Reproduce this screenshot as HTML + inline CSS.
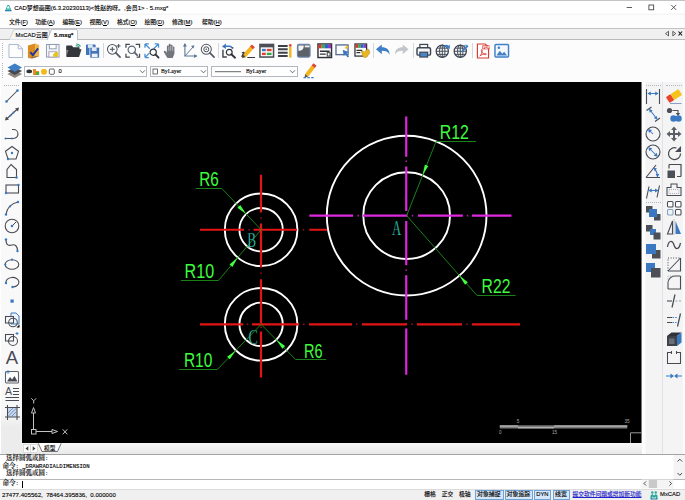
<!DOCTYPE html>
<html lang="zh-CN">
<head>
<meta charset="utf-8">
<title>CAD梦想画图</title>
<style>
html,body{margin:0;padding:0;background:#f0f0f0;}
body{width:685px;height:500px;overflow:hidden;position:relative;font-family:"Liberation Sans","Noto Sans CJK SC",sans-serif;color:#000;}
.abs{position:absolute;}
svg{overflow:visible;}
.t{position:absolute;white-space:nowrap;-webkit-text-stroke:.12px currentColor;}
.menu u{text-decoration-thickness:.5px;text-underline-offset:.5px;}
.serif{font-family:"Liberation Serif","Noto Serif CJK SC",serif;}
.mono{font-family:"Liberation Mono","Noto Serif CJK SC",monospace;font-weight:500;}
.lm{font-size:5.62px;}
#titlebar{left:0;top:0;width:685px;height:15px;background:linear-gradient(#fff 0,#fff 11.5px,#f3f3f3 14px);border-top:1px solid #c4c4c4;box-sizing:border-box;}
#menubar{left:0;top:14.5px;width:685px;height:14px;background:#fdfdfd;}
#tabbar{left:0;top:28px;width:685px;height:12px;background:#f0f0f1;border-top:1px solid #c2c3c6;border-bottom:1px solid #b9babd;box-sizing:border-box;}
#tb1{left:0;top:40px;width:685px;height:21px;background:#fcfcfd;}
#tb2{left:0;top:61px;width:685px;height:21px;background:#fcfcfd;}
#lefttb{left:0;top:82px;width:22px;height:372px;background:linear-gradient(#fafafb 0,#f8f8f9 330px,#ececec 345px);border-left:1.5px solid #fff;box-sizing:border-box;}
#canvas{left:22px;top:82px;}
#righttb{left:641.5px;top:82px;width:43.5px;height:372px;background:linear-gradient(90deg,#fdfdfd 0,#fdfdfd 3px,#f4f4f5 4px,#f4f4f5 40.5px,#fdfdfd 41.5px);}
#modelstrip{left:22px;top:443px;width:620px;height:11px;background:linear-gradient(#f8f8f8,#e9e9e9);}
#cmdhist{left:0;top:453.7px;width:685px;height:25.3px;background:#fff;border-top:1.4px solid #a4a4a4;box-sizing:border-box;}
#cmdline{left:0;top:479px;width:685px;height:10px;background:#fff;border-top:1px solid #b8b8b8;box-sizing:border-box;}
#status{left:0;top:489px;width:685px;height:11px;background:#f0f0f0;border-top:1px solid #dcdcdc;box-sizing:border-box;}
.grip{width:1px;border-left:1px dotted #b0b6c0;}
.hgrip{height:1px;border-top:1px dotted #b0b6c0;}
.combo{background:#fff;border:1px solid #b3b7be;box-sizing:border-box;}
.sbtn{background:#d5e7f8;border:1px solid #6fa3d8;box-sizing:border-box;}
</style>
</head>
<body>
<div id="titlebar" class="abs"></div>
<svg class="abs" style="left:4.8px;top:4.6px" width="6.6" height="6.4" viewBox="0 0 16 15"><path d="M6 0h4l5 11H1z" fill="#2aa89a"/><path d="M6.5 3h3l2 5h-7z" fill="#fff"/><path d="M0 12h16v3H0z" fill="#1f7fae"/></svg>
<div class="t " style="left:14.2px;top:4.62px;font-size:5.97px;line-height:7.16px;">CAD梦想画图(6.3.20230113)&lt;姓赵的呀。,会员1&gt; - 5.mxg*</div>
<svg class="abs" style="left:620px;top:0" width="65" height="15" viewBox="620 0 65 15"><path d="M626.7 7.5h5.3" stroke="#333" stroke-width=".8"/><rect x="648.9" y="5" width="4.8" height="4.8" fill="none" stroke="#333" stroke-width=".8"/><path d="M671.2 4.9l5 5M676.2 4.9l-5 5" stroke="#333" stroke-width=".8"/></svg>
<div id="menubar" class="abs"></div>
<div class="t menu" style="left:9px;top:18.72px;font-size:5.8px;line-height:6.96px;">文件(<u>F</u>)</div>
<div class="t menu" style="left:35.3px;top:18.72px;font-size:5.8px;line-height:6.96px;">功能(<u>A</u>)</div>
<div class="t menu" style="left:62.5px;top:18.72px;font-size:5.8px;line-height:6.96px;">编辑(<u>E</u>)</div>
<div class="t menu" style="left:89.5px;top:18.72px;font-size:5.8px;line-height:6.96px;">视图(<u>V</u>)</div>
<div class="t menu" style="left:117px;top:18.72px;font-size:5.8px;line-height:6.96px;">格式(<u>O</u>)</div>
<div class="t menu" style="left:144.5px;top:18.72px;font-size:5.8px;line-height:6.96px;">绘图(<u>D</u>)</div>
<div class="t menu" style="left:172px;top:18.72px;font-size:5.8px;line-height:6.96px;">修改(<u>M</u>)</div>
<div class="t menu" style="left:202px;top:18.72px;font-size:5.8px;line-height:6.96px;">帮助(<u>H</u>)</div>
<div id="tabbar" class="abs"></div>
<svg class="abs" style="left:0;top:28px" width="685" height="13" viewBox="0 28 685 13"><path d="M9 40l5-10.5h35l1.5 10.5z" fill="#f4f5f7" stroke="#b4b8c0" stroke-width=".6"/><path d="M47 40.5l4.5-11h24.5q1.5 0 1.5 1.5v9.5z" fill="#fff" stroke="#a8acb4" stroke-width=".7"/><path d="M668.5 31.3v4.6l-3-2.3zM672.8 31.3v4.6l3-2.3z" fill="none" stroke="#222" stroke-width=".7"/><path d="M678.5 31.5l3.6 4M682.1 31.5l-3.6 4" stroke="#111" stroke-width="1.1"/></svg>
<div class="t " style="left:15.5px;top:31.76px;font-size:5.9px;line-height:7.08px;">MxCAD云图</div>
<div class="t " style="left:54px;top:31.76px;font-size:5.9px;line-height:7.08px;font-weight:bold;">5.mxg*</div>
<div id="tb1" class="abs"></div>
<div class="grip abs" style="left:2px;top:43px;height:15px"></div>
<svg class="abs" style="left:7.5px;top:43px" width="15.5" height="15.5" viewBox="0 0 16 16"><path d="M1 1.5h9.5l4.5 4.5v9h-14z" fill="#fdfdfe" stroke="#a9b6cc"/><path d="M10.5 1.5v4.5h4.5" fill="none" stroke="#a9b6cc"/></svg>
<svg class="abs" style="left:25.8px;top:43px" width="15.5" height="15.5" viewBox="0 0 16 16"><path d="M2 2.5l7.5-2v13l-7.5 2z" fill="#dd8a1e"/><path d="M9.5 .500l4 1.5v12l-4-.500z" fill="#f0b04a"/><path d="M2 15.5l7.5-2 4 .500-7 2z" fill="#a86a20"/><path d="M4.5 9.5l2.5 3 5.5-7" fill="none" stroke="#1d3a9c" stroke-width="2"/></svg>
<svg class="abs" style="left:45px;top:43px" width="15.5" height="15.5" viewBox="0 0 16 16"><rect x="1.5" y="1.5" width="13" height="13" fill="#f3f4f8" stroke="#8f9bb5"/><rect x="4.5" y="1.5" width="7" height="4.5" fill="#fff" stroke="#8f9bb5"/><rect x="4" y="9" width="8" height="5.5" fill="#fff" stroke="#a9a0b8"/><path d="M8 12l3-3 3 1-1 4-4 .5z" fill="#e6c41c"/></svg>
<svg class="abs" style="left:66px;top:43px" width="15.5" height="15.5" viewBox="0 0 16 16"><path d="M.500 2.5h5.5l1.5 1.8h6.5v3h-13.5z" fill="#33363b"/><path d="M.500 14.5l2-8h13.5l-2.5 8z" fill="#33363b"/><path d="M1 3v11" stroke="#33363b" stroke-width="1.2"/><path d="M10 3a3.5 3.5 0 0 1 3.5 1M10.5 1a5 5 0 0 1 4.5 2.5" fill="none" stroke="#2a9a72" stroke-width="1.1"/></svg>
<svg class="abs" style="left:85px;top:43px" width="15.5" height="15.5" viewBox="0 0 16 16"><rect x="1" y="1.5" width="10" height="11" rx="1" fill="#3f74b8"/><rect x="3" y="1.5" width="5" height="3.5" fill="#dfe8f4"/><rect x="5" y="4.5" width="10" height="11" rx="1" fill="#3f74b8" stroke="#f6f7f9" stroke-width=".8"/><rect x="7" y="4.8" width="5" height="3.5" fill="#dfe8f4"/><rect x="7" y="11" width="6" height="3.5" fill="#eef2f8"/></svg>
<svg class="abs" style="left:105.5px;top:43px" width="15.5" height="15.5" viewBox="0 0 16 16"><circle cx="6.5" cy="6.5" r="5" fill="#fbfcfd" stroke="#53575f" stroke-width="1.05"/><path d="M10 10L14.5 14.5" stroke="#53575f" stroke-width="1.75" stroke-linecap="round"/><path d="M4 6.5h5M6.5 4v5M11 3h4M13 1v4" stroke="#444a52" stroke-width="1" fill="none"/></svg>
<svg class="abs" style="left:125px;top:43px" width="15.5" height="15.5" viewBox="0 0 16 16"><path d="M1 5V1.5h4M11 1.5h4V5M15 11v3.5h-3M5 14.5H1V11" fill="none" stroke="#444a52" stroke-width="1.3"/><circle cx="7" cy="7" r="3.8" fill="#fbfcfd" stroke="#5a6470" stroke-width="1.2"/><path d="M9.7 9.7L12.5 12.5" stroke="#5a6470" stroke-width="1.9" stroke-linecap="round"/></svg>
<svg class="abs" style="left:144px;top:43px" width="15.5" height="15.5" viewBox="0 0 16 16"><path d="M1 1l5 5M1 1h4M1 1v4M15 1l-5 5M15 1h-4M15 1v4M1 15l4.5-4.5M1 15h4M1 15v-4" fill="none" stroke="#4a8fd4" stroke-width="1.3"/><circle cx="9.5" cy="9.5" r="3.2" fill="#fbfcfd" stroke="#2d3138" stroke-width="1.2"/><path d="M11.8 11.8L15 15" stroke="#2d3138" stroke-width="1.9" stroke-linecap="round"/></svg>
<svg class="abs" style="left:163px;top:43px" width="15.5" height="15.5" viewBox="0 0 16 16"><path d="M4.5 15.5l-3.5-6c-.6-1.5 1-2.2 2-1l1 1.5V3.5c0-1.3 1.9-1.3 1.9 0V1.8c0-1.4 2-1.4 2 0v1c0-1.4 2-1.4 2 0v1.7c0-1.3 1.9-1.3 1.9 0V11l-1.8 4.5z" fill="#73767d"/><path d="M6 4v4M8 3v5M10 4v4" stroke="#f7f8fa" stroke-width=".5"/></svg>
<svg class="abs" style="left:181.5px;top:43px" width="15.5" height="15.5" viewBox="0 0 16 16"><path d="M3 1v12.5h12" fill="none" stroke="#5a7596" stroke-width="1.1"/><path d="M3 0l-2 3.5h4zM16 13.5l-3.5-2v4z" fill="#5a7596"/><path d="M3 13.5l8.5-9.5" stroke="#5a7596" stroke-width="1"/><path d="M12.8 2.2l-3.5 1 2.5 2.5z" fill="#5a7596"/></svg>
<svg class="abs" style="left:199.5px;top:43px" width="15.5" height="15.5" viewBox="0 0 16 16"><circle cx="6.5" cy="6.5" r="5.2" fill="#fbfcfd" stroke="#53575f" stroke-width="1.05"/><path d="M10.2 10.2L14.5 14.5" stroke="#53575f" stroke-width="1.75" stroke-linecap="round"/><circle cx="6.5" cy="6.5" r="2.6" fill="none" stroke="#444a52" stroke-width="1"/><circle cx="6.5" cy="6.5" r=".8" fill="#444a52"/></svg>
<svg class="abs" style="left:221px;top:43px" width="15.5" height="15.5" viewBox="0 0 16 16"><path d="M2 7v7.5h4M12 6v-2" fill="none" stroke="#444a52" stroke-width="1.5"/><path d="M1 3.5L5 .5v2h3.5c2.5 0 3.5 1.5 3.5 3h-1.8c0-.8-.6-1.3-1.7-1.3H5v2z" fill="#3b78c2"/><circle cx="8.5" cy="9.5" r="3" fill="#fbfcfd" stroke="#2d3138" stroke-width="1.2"/><path d="M10.7 11.6L14.5 15.2" stroke="#2d3138" stroke-width="1.9" stroke-linecap="round"/></svg>
<svg class="abs" style="left:240.5px;top:43px" width="15.5" height="15.5" viewBox="0 0 16 16"><g transform="rotate(-48 8 8)"><rect x="1" y="6" width="11" height="4.2" fill="#f4b61e"/><rect x="12" y="6" width="3" height="4.2" fill="#e0452e"/><path d="M1 6l-3.5 2.1 3.5 2.1z" fill="#6a5638"/></g><path d="M1 10.5c1.5-1.5 3-1 1.5.5l-1.5 2.5h2.5M6.5 15h8" fill="none" stroke="#33363b" stroke-width="1.2"/></svg>
<svg class="abs" style="left:258.5px;top:43px" width="15.5" height="15.5" viewBox="0 0 16 16"><rect x="1" y="1.5" width="14" height="13" fill="#fff" stroke="#4b4f57" stroke-width="1.6"/><rect x="1" y="1.5" width="14" height="3" fill="#4b4f57"/><rect x="3" y="6" width="4" height="2.5" fill="#3b78c2"/><rect x="8" y="6" width="5" height="2.5" fill="#e0442e"/><rect x="3" y="10" width="4" height="2.5" fill="#e0442e"/><rect x="8" y="10" width="5" height="2.5" fill="#36a852"/></svg>
<svg class="abs" style="left:277px;top:43px" width="15.5" height="15.5" viewBox="0 0 16 16"><path d="M1 3h10M1 6.5h10M1 10h10M1 13.5h10" stroke="#3e4148" stroke-width="2"/><rect x="12.5" y="4" width="2.5" height="11" fill="#f0b820"/><circle cx="13.7" cy="2.5" r="1.4" fill="#e0442e"/></svg>
<svg class="abs" style="left:295.5px;top:43px" width="15.5" height="15.5" viewBox="0 0 16 16"><rect x="1.5" y="1.5" width="13" height="13" rx="1.5" fill="#5d6168" stroke="#6b84a8" stroke-width="1.2"/><path d="M2.5 2.5h5.5c0 3.5-1.5 5.5-5.5 5.5z" fill="#f2f4f8"/><rect x="9" y="2.5" width="5" height="2" fill="#e8ebf0"/></svg>
<svg class="abs" style="left:316.5px;top:43px" width="15.5" height="15.5" viewBox="0 0 16 16"><rect x="1" y="1" width="14" height="14" fill="#fff" stroke="#2f3238" stroke-width="1.5"/><rect x="1.5" y="1.5" width="3.3" height="4" fill="#d8342a"/><rect x="4.8" y="1.5" width="3.3" height="4" fill="#36a852"/><rect x="8.1" y="1.5" width="3.3" height="4" fill="#2d5fd0"/><rect x="11.4" y="1.5" width="3.1" height="4" fill="#8a3ac0"/><path d="M3 8.5h10M3 11.5h6" stroke="#2f3238" stroke-width="1.5"/><rect x="10.5" y="10" width="3" height="3.5" fill="none" stroke="#2f3238"/></svg>
<svg class="abs" style="left:335px;top:43px" width="15.5" height="15.5" viewBox="0 0 16 16"><rect x="1" y="2" width="12.5" height="10" fill="#fdfdfe" stroke="#5b6f92" stroke-width="1.4"/><path d="M8 7l6.5 2.5-2.5 1 2.5 3.5-1.5 1-2.3-3.5-1.7 1.8z" fill="#3b78c2"/><path d="M10 5l2.5-2.5 1.5 1.5L11.5 6.5z" fill="#e8c030"/></svg>
<svg class="abs" style="left:354px;top:43px" width="15.5" height="15.5" viewBox="0 0 16 16"><rect x="1" y="1" width="12" height="12.5" fill="#fff" stroke="#2f3238" stroke-width="1.3"/><rect x="1.5" y="1.5" width="2.8" height="3.5" fill="#d8342a"/><rect x="4.3" y="1.5" width="2.8" height="3.5" fill="#36a852"/><rect x="7.1" y="1.5" width="2.8" height="3.5" fill="#2d5fd0"/><rect x="9.9" y="1.5" width="2.6" height="3.5" fill="#8a3ac0"/><path d="M2.5 7.5h6M2.5 10h4" stroke="#2f3238" stroke-width="1.3"/><path d="M8 10c-1-1.5.5-2.5 1.5-1.5l1 1 3-3c1-1 2.2.2 1.3 1.2 1-.5 1.7.7 1 1.5.7.3.7 1.3 0 1.8L13 14.5c-1.5 1.2-3 .5-4-1z" fill="#e8b820" stroke="#a87a10" stroke-width=".5"/></svg>
<svg class="abs" style="left:375px;top:43px" width="15.5" height="15.5" viewBox="0 0 16 16"><path d="M1 6.5L7 1.5v3c5 0 8 2.5 8 7.5-1.5-3-4-4-8-4v3.5z" fill="#3f7fc6"/></svg>
<svg class="abs" style="left:393.5px;top:43px" width="15.5" height="15.5" viewBox="0 0 16 16"><path d="M15 6.5L9 1.5v3c-5 0-8 2.5-8 7.5 1.5-3 4-4 8-4v3.5z" fill="#c3c7cc"/></svg>
<svg class="abs" style="left:415.5px;top:43px" width="15.5" height="15.5" viewBox="0 0 16 16"><rect x="4" y="1.5" width="8" height="4" fill="#fff" stroke="#3e4652" stroke-width="1.3"/><rect x="1" y="5" width="14" height="7.5" rx="1.5" fill="#f4f6f9" stroke="#3e4652" stroke-width="1.5"/><rect x="4" y="9.5" width="8" height="5" fill="#4a86c8" stroke="#3e4652" stroke-width="1.2"/></svg>
<svg class="abs" style="left:434.5px;top:43px" width="15.5" height="15.5" viewBox="0 0 16 16"><circle cx="7.5" cy="8.5" r="6.3" fill="#fff" stroke="#3e4652" stroke-width="1.3"/><ellipse cx="7.5" cy="8.5" rx="2.8" ry="6.3" fill="none" stroke="#3e4652" stroke-width="1"/><path d="M1.2 8.5h12.6M2.2 5.3h10.6M2.2 11.7h10.6M7.5 2.2v12.6" stroke="#3e4652" stroke-width="1" fill="none"/><path d="M8.5 4c1.5-2.5 4-2.8 5.5-1.2l1.2-1.3.3 4.5-4.3-.5 1.3-1.3c-1-1-2.7-.8-4 .8z" fill="#3f7fc6"/></svg>
<svg class="abs" style="left:453px;top:43px" width="15.5" height="15.5" viewBox="0 0 16 16"><circle cx="7.5" cy="8.5" r="6.3" fill="#fff" stroke="#3e4652" stroke-width="1.3"/><ellipse cx="7.5" cy="8.5" rx="2.8" ry="6.3" fill="none" stroke="#3e4652" stroke-width="1"/><path d="M1.2 8.5h12.6M2.2 5.3h10.6M2.2 11.7h10.6M7.5 2.2v12.6" stroke="#3e4652" stroke-width="1" fill="none"/><path d="M9 8l5.5-6 1.5 1.5-6 5.5-2 .8z" fill="#3f7fc6"/><path d="M11 3c1.5-1 3 -1 4 0" stroke="#3f7fc6" fill="none"/></svg>
<svg class="abs" style="left:475px;top:43px" width="15.5" height="15.5" viewBox="0 0 16 16"><path d="M2.5 1h8l3.5 3.5v11h-11.5z" fill="#fff" stroke="#d83a34" stroke-width="1.2"/><rect x="7.5" y="2.5" width="7.5" height="4" fill="#d83a34"/><text x="8" y="6" font-size="3.6" font-weight="bold" fill="#fff" font-family="Liberation Sans,sans-serif">PDF</text><path d="M5 13.5c1.5-1.5 2.5-4 2.5-6 0-1-1-1-1 0 0 2 2 4.5 4.5 4.5 1 0 1-1 0-1-2 0-4.5 1-6 2.5z" fill="none" stroke="#d83a34" stroke-width=".9"/></svg>
<svg class="abs" style="left:493.5px;top:43px" width="15.5" height="15.5" viewBox="0 0 16 16"><rect x="1" y="1.5" width="14" height="13" rx="1" fill="#f4f8fc" stroke="#3f7fc6" stroke-width="1.5"/><path d="M2.5 13l3.5-5 2.5 3 2-2 3 4z" fill="#3f7fc6"/><circle cx="5" cy="5" r="1.3" fill="#3f7fc6"/></svg>
<div class="abs" style="left:102.5px;top:43px;width:1px;height:15px;background:#d4d7dc"></div>
<div class="abs" style="left:218px;top:43px;width:1px;height:15px;background:#d4d7dc"></div>
<div class="abs" style="left:372.5px;top:43px;width:1px;height:15px;background:#d4d7dc"></div>
<div class="abs" style="left:412.5px;top:43px;width:1px;height:15px;background:#d4d7dc"></div>
<div class="abs" style="left:472px;top:43px;width:1px;height:15px;background:#d4d7dc"></div>
<div id="tb2" class="abs"></div>
<div class="grip abs" style="left:2px;top:63px;height:15px"></div>
<svg class="abs" style="left:7.2px;top:63.2px" width="15.5" height="15.5" viewBox="0 0 16 16"><path d="M8 7.5l7.5 3.8-7.5 4.2-7.5-4.2z" fill="#8d857e"/><path d="M8 4.5l7.5 3.8-7.5 4.2-7.5-4.2z" fill="#454950"/><path d="M8 .500l7.5 4.2-7.5 4.3-7.5-4.3z" fill="#3f7fc6"/></svg>
<div class="combo abs" style="left:24px;top:66px;width:123px;height:10.5px"></div>
<div class="combo abs" style="left:150px;top:66px;width:58px;height:10.5px"></div>
<div class="combo abs" style="left:211px;top:66px;width:86.5px;height:10.5px"></div>
<svg class="abs" style="left:24px;top:66px" width="280" height="11" viewBox="24 66 280 11"><path d="M26.5 70.5q2.5-2 5.5 0v2q-3 1.5-5.5 0z" fill="#2d3138"/><path d="M33 69h3v2h3v4h-6z" fill="#e88a2a"/><rect x="35.8" y="72" width="3.4" height="3" fill="#5aa83a"/><circle cx="44" cy="71.7" r="3" fill="#f2b81c"/><rect x="49.3" y="69" width="5" height="5.3" rx="1" fill="#fff" stroke="#555" stroke-width=".9"/><path d="M140 70.3l2.5 2.5 2.5-2.5M201 70.3l2.5 2.5 2.5-2.5M290 70.3l2.5 2.5 2.5-2.5" fill="none" stroke="#444" stroke-width=".8"/><rect x="153" y="69" width="4.5" height="5" fill="#fff" stroke="#333" stroke-width=".7"/><path d="M215 71.7h26" stroke="#222" stroke-width=".7"/></svg>
<div class="t " style="left:58.5px;top:68.22px;font-size:5.8px;line-height:6.96px;">0</div>
<div class="t serif" style="left:161px;top:68.15px;font-size:5.75px;line-height:6.90px;">ByLayer</div>
<div class="t serif" style="left:246px;top:68.15px;font-size:5.75px;line-height:6.90px;">ByLayer</div>
<svg class="abs" style="left:302.5px;top:62.5px" width="15.5" height="15.5" viewBox="0 0 16 16"><g transform="rotate(-52 8 7)"><rect x="1" y="5" width="11" height="4.2" fill="#f4b61e"/><rect x="12" y="5" width="3" height="4.2" fill="#e0452e"/><path d="M1 5l-3.5 2.1 3.5 2.1z" fill="#6a5638"/></g><path d="M.500 15.2h2.5M4.5 15.2h2.5M8.5 15.2h2.5" stroke="#3b78c2" stroke-width="1.3"/></svg>
<div id="lefttb" class="abs"></div>
<div class="hgrip abs" style="left:4px;top:85px;width:15px"></div>
<svg class="abs" style="left:3.5px;top:88.3px" width="16" height="16" viewBox="0 0 16 16"><path d="M2.5 13.5L13.5 2.5" stroke="#484b53" stroke-width="1.05"/><circle cx="2.5" cy="13.5" r="1.3" fill="#3b78c2"/><circle cx="13.5" cy="2.5" r="1.3" fill="#3b78c2"/></svg>
<svg class="abs" style="left:3.5px;top:106.3px" width="16" height="16" viewBox="0 0 16 16"><path d="M2 13.5L14 2.5" stroke="#484b53" stroke-width="1.05"/><path d="M1 14.5l1-4 3 3zM15 1.5l-1 4-3-3z" fill="#484b53"/><circle cx="6.5" cy="9.5" r="1" fill="#3b78c2"/><circle cx="9.5" cy="6.5" r="1" fill="#3b78c2"/></svg>
<svg class="abs" style="left:3.5px;top:126px" width="16" height="16" viewBox="0 0 16 16"><path d="M1.5 12.5h8a4.5 4.5 0 0 0 0-9h-1.5" fill="none" stroke="#484b53" stroke-width="1.1"/><circle cx="1.5" cy="12.5" r="1" fill="#3b78c2"/><circle cx="8" cy="12.5" r="1" fill="#3b78c2"/></svg>
<svg class="abs" style="left:3.5px;top:144.5px" width="16" height="16" viewBox="0 0 16 16"><path d="M8 1.5l6.5 4.8-2.5 7.7h-8l-2.5-7.7z" fill="none" stroke="#484b53" stroke-width="1.1"/><circle cx="8" cy="8" r="1.2" fill="#3b78c2"/><circle cx="4" cy="14" r="1.2" fill="#3b78c2"/></svg>
<svg class="abs" style="left:3.5px;top:162.5px" width="16" height="16" viewBox="0 0 16 16"><path d="M7 1.5l5.5 5v8h-9.5v-8z" fill="none" stroke="#484b53" stroke-width="1.1"/><circle cx="12.5" cy="14.5" r="1.2" fill="#3b78c2"/></svg>
<svg class="abs" style="left:3.5px;top:181px" width="16" height="16" viewBox="0 0 16 16"><rect x="2" y="4" width="12.5" height="8" fill="none" stroke="#484b53" stroke-width="1.1"/><circle cx="2" cy="12" r="1.2" fill="#3b78c2"/><circle cx="14.5" cy="4" r="1.2" fill="#3b78c2"/></svg>
<svg class="abs" style="left:3.5px;top:199.5px" width="16" height="16" viewBox="0 0 16 16"><path d="M2 14.5c1-6 5-11 12-12.5" fill="none" stroke="#484b53" stroke-width="1.1"/><circle cx="2" cy="14.5" r="1.2" fill="#3b78c2"/><circle cx="14" cy="2" r="1.2" fill="#3b78c2"/><circle cx="6" cy="6.5" r="1.1" fill="#3b78c2"/></svg>
<svg class="abs" style="left:3.5px;top:218.3px" width="16" height="16" viewBox="0 0 16 16"><circle cx="8" cy="8" r="6.8" fill="none" stroke="#484b53" stroke-width="1.1"/><path d="M8 8l4-4" stroke="#484b53" stroke-width="1"/><circle cx="8" cy="8" r="1.3" fill="#3b78c2"/></svg>
<svg class="abs" style="left:3.5px;top:237px" width="16" height="16" viewBox="0 0 16 16"><path d="M2 2.5c0 6 3 6.5 6 5.5s5.5 1 5.5 6" fill="none" stroke="#484b53" stroke-width="1.1"/><circle cx="2" cy="2.5" r="1.2" fill="#3b78c2"/><circle cx="13.5" cy="14" r="1.2" fill="#3b78c2"/></svg>
<svg class="abs" style="left:3.5px;top:256px" width="16" height="16" viewBox="0 0 16 16"><ellipse cx="8" cy="8.5" rx="6.8" ry="4.8" fill="none" stroke="#484b53" stroke-width="1.1"/><circle cx="8" cy="3.7" r="1.1" fill="#3b78c2"/><circle cx="1.2" cy="8.5" r="1.1" fill="#3b78c2"/></svg>
<svg class="abs" style="left:3.5px;top:273.5px" width="16" height="16" viewBox="0 0 16 16"><path d="M2 9a6.5 4.8 0 1 1 6.5 4" fill="none" stroke="#484b53" stroke-width="1.1"/><circle cx="2" cy="9" r="1.2" fill="#3b78c2"/><circle cx="8.5" cy="13" r="1.2" fill="#3b78c2"/></svg>
<svg class="abs" style="left:3.5px;top:293px" width="16" height="16" viewBox="0 0 16 16"><rect x="6.5" y="6.5" width="3.2" height="3.2" fill="#3b78c2"/></svg>
<svg class="abs" style="left:3.5px;top:311.5px" width="16" height="16" viewBox="0 0 16 16"><path d="M7 1h5l3 3v8h-8z" fill="#eef3fa" stroke="#3b78c2" stroke-width="1"/><rect x="1.5" y="4.5" width="8" height="6.5" fill="#f6f7f9" stroke="#484b53" stroke-width="1.05"/><circle cx="9" cy="10.5" r="4.3" fill="none" stroke="#484b53" stroke-width="1.05"/><path d="M15.5 12.5v3h-3z" fill="#000"/></svg>
<svg class="abs" style="left:3.5px;top:330.5px" width="16" height="16" viewBox="0 0 16 16"><rect x="1.5" y="3.5" width="8" height="6.5" fill="none" stroke="#484b53" stroke-width="1.05"/><circle cx="9" cy="10" r="4.5" fill="none" stroke="#484b53" stroke-width="1.05"/><path d="M11.5 2.5h3M13 1v3" stroke="#3b78c2" stroke-width="1"/></svg>
<svg class="abs" style="left:3.5px;top:348.5px" width="16" height="16" viewBox="0 0 16 16"><text x="8" y="14.6" text-anchor="middle" font-family="Liberation Sans,sans-serif" font-size="18.5" fill="#484b53">A</text></svg>
<svg class="abs" style="left:3.5px;top:368.5px" width="16" height="16" viewBox="0 0 16 16"><rect x="1.5" y="2.5" width="13" height="11.5" rx="1" fill="#fdfdfe" stroke="#5a5e66" stroke-width="1.05"/><path d="M3 12.5l3-4.5 2 2.5 2.5-3.5 3 5.5z" fill="#484b53"/><circle cx="4" cy="3" r="1.2" fill="none" stroke="#3b78c2" stroke-width=".8"/></svg>
<svg class="abs" style="left:3.5px;top:386px" width="16" height="16" viewBox="0 0 16 16"><text x="4.5" y="8.8" text-anchor="middle" font-family="Liberation Sans,sans-serif" font-size="10.5" fill="#484b53">A</text><path d="M9 2.5h6M9 5.5h6M9 8.5h6M1.5 11.5h13.5M1.5 14.5h13.5" stroke="#484b53" stroke-width="1.1"/></svg>
<svg class="abs" style="left:3.5px;top:404px" width="16" height="16" viewBox="0 0 16 16"><rect x="3.5" y="3.5" width="9.5" height="9.5" fill="#c9d8ec"/><path d="M3.5 1v15M13 1v15M1 3.5h15M1 13h15" stroke="#484b53" stroke-width="1.05"/><path d="M4 9l5-5M4 12.5l8.5-8.5M7.5 12.5l5-5" stroke="#5b82b8" stroke-width=".8"/></svg>
<div id="righttb" class="abs"></div>
<div class="abs" style="left:662px;top:82px;width:1px;height:372px;background:#e0e2e6"></div>
<div class="hgrip abs" style="left:646px;top:85px;width:15px"></div>
<div class="hgrip abs" style="left:666px;top:85px;width:16px"></div>
<div class="hgrip abs" style="left:646px;top:202px;width:15px"></div>
<svg class="abs" style="left:644.7px;top:87.5px" width="16" height="16" viewBox="0 0 16 16"><path d="M1.5 1v15M14.5 1v15" stroke="#484b53" stroke-width="1.1"/><path d="M3 5.5h10" stroke="#3b78c2" stroke-width="1.05"/><path d="M2.3 5.5l3.5-2v4zM13.7 5.5l-3.5-2v4z" fill="#3b78c2"/></svg>
<svg class="abs" style="left:644.7px;top:106px" width="16" height="16" viewBox="0 0 16 16"><path d="M1.5 4.5l5-3.5M10 15.5l5-3.5" stroke="#484b53" stroke-width="1.1"/><path d="M5 4l6.5 8.5" stroke="#3b78c2" stroke-width="1.05"/><path d="M4 2.8l3.7 1.7-3 2.2zM12.5 13.8l-3.7-1.7 3-2.2z" fill="#3b78c2"/></svg>
<svg class="abs" style="left:644.7px;top:125.5px" width="16" height="16" viewBox="0 0 16 16"><circle cx="8" cy="8" r="7" fill="none" stroke="#484b53" stroke-width="1.1"/><path d="M8 8L4 4" stroke="#3b78c2" stroke-width="1.05"/><path d="M3 3l4 1-3 3z" fill="#3b78c2"/></svg>
<svg class="abs" style="left:644.7px;top:144px" width="16" height="16" viewBox="0 0 16 16"><circle cx="8" cy="8" r="7" fill="none" stroke="#484b53" stroke-width="1.1"/><path d="M4.5 4.5l7 7" stroke="#3b78c2" stroke-width="1.05"/><path d="M3.3 3.3l4 1-3 3zM12.7 12.7l-4-1 3-3z" fill="#3b78c2"/></svg>
<svg class="abs" style="left:644.7px;top:162.5px" width="16" height="16" viewBox="0 0 16 16"><path d="M1 14.5h14M1 14.5L11 2" fill="none" stroke="#484b53" stroke-width="1.1"/><path d="M9.5 6c2 2 3 5 3 8" fill="none" stroke="#3b78c2" stroke-width="1.1"/><path d="M8.5 4.5l3.5 1-2.5 2.5zM12.5 14.5l-1.8-3.5h3.6z" fill="#3b78c2"/></svg>
<svg class="abs" style="left:644.7px;top:183.5px" width="16" height="16" viewBox="0 0 16 16"><path d="M4 2.5l-2.5 12M14.5 1.5l-2.5 12" stroke="#484b53" stroke-width="1.1"/><path d="M4 6.5h9" stroke="#3b78c2" stroke-width="1.05"/><path d="M3.2 6.5l3.5-2v4zM13.5 6.5l-3.5-2v4z" fill="#3b78c2"/></svg>
<svg class="abs" style="left:644.7px;top:205px" width="16" height="16" viewBox="0 0 16 16"><rect x="1" y="1" width="6.5" height="6.5" fill="#4c4f56"/><rect x="9" y="9" width="6.5" height="6.5" fill="#4c4f56"/><rect x="4" y="4" width="8" height="8" fill="#3b78c2"/></svg>
<svg class="abs" style="left:644.7px;top:224px" width="16" height="16" viewBox="0 0 16 16"><rect x="1" y="1" width="6.5" height="6.5" fill="#4c4f56"/><rect x="5" y="5" width="6" height="6" fill="#3b78c2"/><rect x="8.5" y="8.5" width="7" height="7" fill="#4c4f56"/></svg>
<svg class="abs" style="left:644.7px;top:243px" width="16" height="16" viewBox="0 0 16 16"><rect x="7" y="7" width="8.5" height="8.5" fill="#4c4f56"/><rect x="1" y="1" width="10" height="10" fill="#3b78c2"/></svg>
<svg class="abs" style="left:644.7px;top:261.5px" width="16" height="16" viewBox="0 0 16 16"><rect x="1" y="1" width="9" height="9" fill="#3b78c2"/><rect x="6" y="6" width="9.5" height="9.5" fill="#4c4f56"/></svg>
<svg class="abs" style="left:666.3px;top:88.5px" width="16" height="16" viewBox="0 0 16 16"><g transform="rotate(-33 8 7)"><rect x=".500" y="3.5" width="5.5" height="7" rx=".800" fill="#e8452c"/><rect x="6" y="3.5" width="9.5" height="7" rx=".800" fill="#f6c21c"/></g><path d="M4 14.5h11.5" stroke="#8aa0cc" stroke-width="1"/></svg>
<svg class="abs" style="left:666.3px;top:107px" width="16" height="16" viewBox="0 0 16 16"><circle cx="3.5" cy="3.5" r="2.6" fill="#4c4f56"/><path d="M6.5 3.5h5.5v3" fill="none" stroke="#4c4f56" stroke-width="1.1"/><path d="M12 9l-2.2-3h4.4z" fill="#4c4f56"/><circle cx="7.5" cy="11.5" r="3.2" fill="#3b78c2"/><circle cx="12.5" cy="11.5" r="3.2" fill="#3b78c2"/></svg>
<svg class="abs" style="left:666.3px;top:126px" width="16" height="16" viewBox="0 0 16 16"><path d="M8 .5l3 3.5h-2v3h3v-2l3.5 3-3.5 3v-2h-3v3h2l-3 3.5-3-3.5h2v-3h-3v2l-3.5-3 3.5-3v2h3v-3h-2z" fill="#5b5e66"/></svg>
<svg class="abs" style="left:666.3px;top:144.5px" width="16" height="16" viewBox="0 0 16 16"><path d="M10.5 3a6 6 0 1 0 4 5.5" fill="none" stroke="#484b53" stroke-width="1.2"/><path d="M15 1v6h-6z" fill="#484b53"/></svg>
<svg class="abs" style="left:666.3px;top:162.5px" width="16" height="16" viewBox="0 0 16 16"><path d="M3 1.5h12v12M3 1.5v4M15 13.5h-4" fill="none" stroke="#484b53" stroke-width="1.2"/><rect x="1.5" y="7.5" width="7.5" height="7.5" fill="#4c4f56"/></svg>
<svg class="abs" style="left:666.3px;top:181.5px" width="16" height="16" viewBox="0 0 16 16"><path d="M5 5.5v-3.5h6v3.5h4v8h-14v-8z" fill="none" stroke="#484b53" stroke-width="1.05"/><path d="M3 7.5h10v4h-10z" fill="none" stroke="#9aa0aa" stroke-width=".8" stroke-dasharray="1 1"/></svg>
<svg class="abs" style="left:666.3px;top:200px" width="16" height="16" viewBox="0 0 16 16"><rect x="1.5" y="1.5" width="5.5" height="5.5" rx="1" fill="#fff" stroke="#484b53" stroke-width="1.05"/><rect x="9.5" y="1.5" width="5.5" height="5.5" rx="1" fill="#fff" stroke="#484b53" stroke-width="1.05"/><rect x="1.5" y="9.5" width="5.5" height="5.5" rx="1" fill="#eef3fa" stroke="#8aa0c0" stroke-width="1.05"/><rect x="9.5" y="9.5" width="5.5" height="5.5" rx="1" fill="#fff" stroke="#484b53" stroke-width="1.05"/></svg>
<svg class="abs" style="left:666.3px;top:219px" width="16" height="16" viewBox="0 0 16 16"><path d="M6.5 2v13h-5z" fill="none" stroke="#484b53" stroke-width="1.1"/><path d="M9.5 2v13h5.5z" fill="#3b78c2"/><path d="M8 0v16" stroke="#9aa0aa" stroke-width=".6"/></svg>
<svg class="abs" style="left:666.3px;top:237px" width="16" height="16" viewBox="0 0 16 16"><path d="M1.5 10c1-7 5-7 6.5-2s5 5 6.5-2" fill="none" stroke="#484b53" stroke-width="1.25"/></svg>
<svg class="abs" style="left:666.3px;top:255.5px" width="16" height="16" viewBox="0 0 16 16"><path d="M2 15h12.5V2" fill="none" stroke="#484b53" stroke-width="1.1"/><path d="M2 15L14.5 2" stroke="#484b53" stroke-width="1.05"/><path d="M2 15V2h12.5" fill="none" stroke="#484b53" stroke-width="1.05" stroke-dasharray="1 1.6"/></svg>
<svg class="abs" style="left:666.3px;top:274px" width="16" height="16" viewBox="0 0 16 16"><path d="M2 15h12.5V2" fill="none" stroke="#484b53" stroke-width="1.1"/><path d="M2 15V9a7 7 0 0 1 7-7h5.5" fill="none" stroke="#484b53" stroke-width="1.05"/><path d="M2 8V2h7" fill="none" stroke="#9aa0aa" stroke-width="1" stroke-dasharray="1 1.6"/></svg>
<svg class="abs" style="left:666.3px;top:292.5px" width="16" height="16" viewBox="0 0 16 16"><path d="M9 1.5l-3 13" stroke="#484b53" stroke-width="1.25"/><path d="M1 8h5" stroke="#484b53" stroke-width="1.1"/><path d="M9.5 8h6" stroke="#9aa0aa" stroke-width="1.05" stroke-dasharray="2 1.5"/></svg>
<svg class="abs" style="left:666.3px;top:311.5px" width="16" height="16" viewBox="0 0 16 16"><path d="M14.5 1.5l-3 13" stroke="#484b53" stroke-width="1.25"/><path d="M1 5.5h5M1 10.5h5" stroke="#484b53" stroke-width="1.1"/><path d="M6.5 5.5h5M6.5 10.5h4" stroke="#3b78c2" stroke-width="1.1" stroke-dasharray="1.5 1.2"/></svg>
<svg class="abs" style="left:666.3px;top:330.5px" width="16" height="16" viewBox="0 0 16 16"><path d="M1 5l4.5-3.5h10l-4.5 3.5z" fill="#2f3238"/><rect x="1" y="5" width="10" height="10" fill="#3e4148"/><rect x="3" y="7.5" width="5.5" height="5.5" fill="#6a6e76"/><path d="M11 5l4.5-3.5v10l-4.5 3.5z" fill="#3b78c2"/></svg>
<svg class="abs" style="left:666.3px;top:349px" width="16" height="16" viewBox="0 0 16 16"><path d="M5.5 3.5h-4v11h13v-11h-4" fill="none" stroke="#484b53" stroke-width="1.05"/><path d="M5.5 2v3M10.5 2v3" stroke="#484b53" stroke-width="1.05"/></svg>
<svg class="abs" style="left:666.3px;top:367.5px" width="16" height="16" viewBox="0 0 16 16"><path d="M0 8h6M16 8h-6" stroke="#3b78c2" stroke-width="1.1"/><path d="M8 8l-3.5-2.5v5zM8 8l3.5-2.5v5z" fill="#3b78c2"/></svg>
<div id="modelstrip" class="abs"></div>
<svg class="abs" style="left:22px;top:443px" width="60" height="11" viewBox="22 443 60 11"><rect x="23.5" y="444.5" width="7" height="8" fill="#fdfdfd" stroke="#c8c8c8" stroke-width=".6"/><rect x="30.5" y="444.5" width="7" height="8" fill="#fdfdfd" stroke="#c8c8c8" stroke-width=".6"/><path d="M28.3 446.3v4.4l-2.8-2.2zM32.7 446.3v4.4l2.8-2.2z" fill="#444"/><path d="M38.3 443.3l3.7 8.2h15.5l3.7-8.2" fill="#fff" stroke="#3a3a3a" stroke-width=".7"/></svg>
<div class="t " style="left:44px;top:444.58px;font-size:5.7px;line-height:6.84px;">模型</div>
<div id="cmdhist" class="abs"></div>
<div id="cmdline" class="abs"></div>
<div class="t mono" style="left:2.5px;top:454.80px;font-size:6.5px;line-height:7.80px;"><span class="lm">&nbsp;</span>选择圆弧或圆<span class="lm">:</span></div>
<div class="t mono" style="left:2.5px;top:462.50px;font-size:6.5px;line-height:7.80px;">命令<span class="lm">: _DRAWRADIALDIMENSION</span></div>
<div class="t mono" style="left:2.5px;top:470.10px;font-size:6.5px;line-height:7.80px;"><span class="lm">&nbsp;</span>选择圆弧或圆<span class="lm">:</span></div>
<div class="t mono" style="left:2.5px;top:480.10px;font-size:6.5px;line-height:7.80px;">命令<span class="lm">:</span></div>
<div class="abs" style="left:22px;top:480.5px;width:1px;height:7px;background:#000"></div>
<svg class="abs" style="left:640px;top:454px" width="45" height="35" viewBox="640 454 45 35"><rect x="673.5" y="455" width="11.5" height="24" fill="#f4f4f4"/><path d="M677.5 461.5l2.3-2.3 2.3 2.3M677.5 473l2.3 2.3 2.3-2.3" fill="none" stroke="#333" stroke-width=".9"/><rect x="641.5" y="479.5" width="32" height="9" fill="#f4f4f4"/><rect x="648.8" y="480" width="8.2" height="8" fill="#c9c9c9"/><path d="M646 481.5l-2 2 2 2M669.5 481.5l2 2-2 2" fill="none" stroke="#333" stroke-width=".9"/></svg>
<div id="status" class="abs"></div>
<div class="t " style="left:2px;top:491.13px;font-size:6.12px;line-height:7.34px;">27477.405562,&nbsp; 78464.395836,&nbsp; 0.000000</div>
<div class="t " style="left:424.3px;top:491.32px;font-size:5.8px;line-height:6.96px;">栅格</div>
<div class="t " style="left:441.7px;top:491.32px;font-size:5.8px;line-height:6.96px;">正交</div>
<div class="t " style="left:459px;top:491.32px;font-size:5.8px;line-height:6.96px;">极轴</div>
<div class="sbtn abs" style="left:475px;top:490px;width:28.5px;height:9.5px"></div>
<div class="sbtn abs" style="left:504.5px;top:490px;width:28.5px;height:9.5px"></div>
<div class="sbtn abs" style="left:534px;top:490px;width:17px;height:9.5px"></div>
<div class="sbtn abs" style="left:552.5px;top:490px;width:17.5px;height:9.5px"></div>
<div class="t " style="left:477px;top:491.26px;font-size:5.9px;line-height:7.08px;">对象捕捉</div>
<div class="t " style="left:506.5px;top:491.26px;font-size:5.9px;line-height:7.08px;">对象追踪</div>
<div class="t " style="left:536.3px;top:491.32px;font-size:5.8px;line-height:6.96px;">DYN</div>
<div class="t " style="left:555px;top:491.26px;font-size:5.9px;line-height:7.08px;">线宽</div>
<div class="t " style="left:572.6px;top:491.36px;font-size:5.74px;line-height:6.89px;color:#2020c8;text-decoration:underline;text-decoration-thickness:.5px;text-underline-offset:.8px;">提交软件问题或增加新功能</div>
<svg class="abs" style="left:650px;top:490.5px" width="8" height="8.5" viewBox="0 0 16 17"><circle cx="4.5" cy="3" r="2.5" fill="#2aa89a"/><circle cx="11.5" cy="3" r="2.5" fill="#2aa89a"/><path d="M1 16V9l3.5-3L8 9l3.5-3L15 9v7h-3.5v-5L8 14l-3.5-3v5z" fill="#2aa89a"/><path d="M1 16h14" stroke="#1f7fae" stroke-width="2"/></svg>
<div class="t " style="left:660px;top:491.26px;font-size:5.9px;line-height:7.08px;">MxCAD</div>
<svg id="canvas" class="abs" width="619.5" height="361" viewBox="22 82 619.5 361">
<rect x="22" y="82" width="619.5" height="361" fill="#000"/>
<g fill="none" stroke="#fff" stroke-width="1.9">
<circle cx="406.65" cy="215.6" r="79.85"/>
<circle cx="406.65" cy="215.6" r="43.4"/>
<circle cx="261.1" cy="229.75" r="36.3"/>
<circle cx="261.1" cy="229.75" r="21.7"/>
<circle cx="261.1" cy="324.35" r="36.3"/>
<circle cx="261.1" cy="324.35" r="21.7"/>
</g>
<g stroke="#e028e0" stroke-width="2.15" fill="none">
<path d="M309.4 215.6H353.1M362.5 215.6H407.5M418 215.6H462.8M472 215.6H511.5"/>
<path d="M406.25 116.6V156.8M406.25 166.4V211M406.25 221V265.3M406.25 275.2V319.7M406.25 328.4V374.8"/>
</g>
<g stroke="#a81ca8" stroke-width="1.6" fill="none">
<path d="M357.5 215.6H359M411.7 215.6H413.2M466.8 215.6H468.3M406.25 160.5V162M406.25 269.6V271.1M406.25 323.3V324.6"/>
</g>
<g stroke="#e31414" stroke-width="2.2" fill="none">
<path d="M200 229.75H244M253.5 229.75H297M309.3 229.75H327"/>
<path d="M200 324.35H243.3M252 324.35H299M309 324.35H352M362 324.35H407M417 324.35H462M472 324.35H520"/>
<path d="M261 174.7V212.5M261 223.5V267.5M261 279.3V323.3M261 331.5V377.5"/>
</g>
<g stroke="#9a1212" stroke-width="1.5" fill="none">
<path d="M248.4 229.75H249.9M302.8 229.75H304.3M246.7 324.35H248.2M303 324.35H304.5M356 324.35H357.5M411.3 324.35H412.8M466.2 324.35H467.7M261 217.2V218.7M261 272.5V274M261 326.6V328"/>
</g>
<g stroke="#1d8f1d" stroke-width=".9" fill="none">
<path d="M195.6 188.5H221.8L261.1 229.75"/>
<path d="M180.8 280.5H218.5L261.1 229.75"/>
<path d="M475.9 141.5H436L406.65 215.6"/>
<path d="M515.6 295.5H477L406.65 215.6"/>
<path d="M179.2 369.5H217.3L261.1 324.35"/>
<path d="M326.3 359.5H295.6L261.1 324.35"/>
</g>
<g fill="#40ff40" stroke="none">
<polygon points="246.1,214 240.2,205.1 237.4,207.7"/>
<polygon points="237.8,257.6 229.5,264.5 232.4,266.9"/>
<polygon points="422.6,175.2 428.3,166.1 424.8,164.7"/>
<polygon points="459.4,275.5 465,284.7 467.8,282.2"/>
<polygon points="235.8,350.4 227.1,356.7 229.8,359.3"/>
<polygon points="276.3,339.8 282.4,348.7 285.1,346.1"/>
</g>
<g fill="#3dfc3d" font-family="'Liberation Sans',sans-serif" font-size="20.3">
<text x="199.3" y="186.2" textLength="19.6" lengthAdjust="spacingAndGlyphs">R6</text>
<text x="184.6" y="278.2" textLength="29.6" lengthAdjust="spacingAndGlyphs">R10</text>
<text x="439.7" y="139.1" textLength="29.2" lengthAdjust="spacingAndGlyphs">R12</text>
<text x="481.6" y="293.2" textLength="28.8" lengthAdjust="spacingAndGlyphs">R22</text>
<text x="183.9" y="366.8" textLength="28.4" lengthAdjust="spacingAndGlyphs">R10</text>
<text x="304.1" y="358.1" textLength="18.6" lengthAdjust="spacingAndGlyphs">R6</text>
</g>
<g fill="#30c4b2" stroke="#000" stroke-width=".25" font-family="'Liberation Serif',serif" font-size="21.9">
<text x="392" y="234.8" textLength="9.2" lengthAdjust="spacingAndGlyphs">A</text>
<text x="247.2" y="246.9" textLength="8.8" lengthAdjust="spacingAndGlyphs">B</text>
<text x="248.4" y="344.3" textLength="9.4" lengthAdjust="spacingAndGlyphs">C</text>
</g>

<g fill="none" stroke="#c4c4c4" stroke-width="1">
<rect x="31.5" y="429.5" width="4.5" height="4.5"/>
<path d="M33.5 429.5V413M36 431.5H52"/>
<path d="M31.5 413L33.5 407.5L35.5 413zM52 429.5L57.5 431.5L52 433.5z"/>
<path d="M31.3 398.3L33.7 400.8L36.2 398.3M33.7 400.8V403.5"/>
<path d="M62.7 429.3L67.3 434.3M67.3 429.3L62.7 434.3"/>
</g>
<g>
<rect x="499.8" y="425.3" width="127.5" height="3.2" fill="#7c7c7c"/>
<path d="M499.8 426h18.2M554.2 426h73.1" stroke="#c8c8c8" stroke-width="1"/>
<path d="M518 427.8h36.2" stroke="#c8c8c8" stroke-width="1"/>
<g fill="#a8a8a8" font-family="'Liberation Sans',sans-serif" font-size="4.6">
<text x="516.8" y="423.3">5</text><text x="624.5" y="423.3">35</text><text x="499" y="433.8">0</text><text x="552" y="433.8">15</text>
</g>
<path d="M630.5 443V432.8H641.5" fill="none" stroke="#9a9a9a" stroke-width="1"/>
</g>

</svg>
</body>
</html>
